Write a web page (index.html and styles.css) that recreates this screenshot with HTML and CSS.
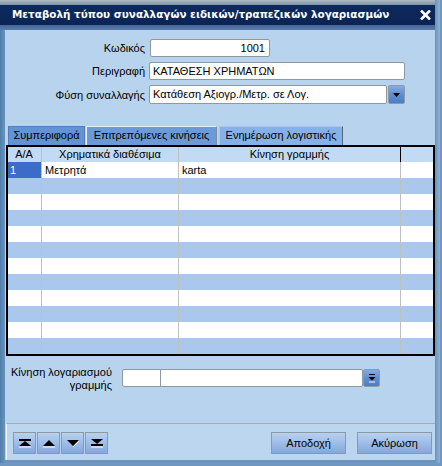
FILE: index.html
```html
<!DOCTYPE html>
<html lang="el">
<head>
<meta charset="utf-8">
<title>Μεταβολή τύπου συναλλαγών</title>
<link rel="stylesheet" href="styles.css">
</head>
<body>
<div class="window">
  <div class="titlebar">
    <span class="title">Μεταβολή τύπου συναλλαγών ειδικών/τραπεζικών λογαριασμών</span>
    <svg class="close" width="11" height="10" viewBox="0 0 11 10"><path d="M1 0.5 L10 9.5 M10 0.5 L1 9.5" stroke="#fff" stroke-width="2.6" fill="none"/></svg>
  </div>
  <div class="frame">
    <div class="form">
      <span class="lbl">Κωδικός</span>
      <div class="field code">1001</div>
      <span class="lbl">Περιγραφή</span>
      <div class="field desc">ΚΑΤΑΘΕΣΗ ΧΡΗΜΑΤΩΝ</div>
      <span class="lbl">Φύση συναλλαγής</span>
      <div class="combo">
        <div class="field combo-text">Κατάθεση Αξιογρ./Μετρ. σε Λογ.</div>
        <div class="drop"><svg width="7" height="4" viewBox="0 0 7 4"><path d="M0 0 H7 L3.5 4 Z" fill="#000"/></svg></div>
      </div>
    </div>

    <div class="tabs">
      <div class="tab t1">Συμπεριφορά</div>
      <div class="tab t2 active">Επιτρεπόμενες κινήσεις</div>
      <div class="tab t3">Ενημέρωση λογιστικής</div>
    </div>

    <div class="grid">
      <div class="row head">
        <div class="c c1">A/A</div>
        <div class="c c2">Χρηματικά διαθέσιμα</div>
        <div class="c c3">Κίνηση γραμμής</div>
        <div class="c c4"></div>
      </div>
      <div class="row"><div class="c c1 sel">1</div><div class="c c2">Μετρητά</div><div class="c c3">karta</div><div class="c c4"></div></div>
      <div class="row alt"><div class="c c1"></div><div class="c c2"></div><div class="c c3"></div><div class="c c4"></div></div>
      <div class="row"><div class="c c1"></div><div class="c c2"></div><div class="c c3"></div><div class="c c4"></div></div>
      <div class="row alt"><div class="c c1"></div><div class="c c2"></div><div class="c c3"></div><div class="c c4"></div></div>
      <div class="row"><div class="c c1"></div><div class="c c2"></div><div class="c c3"></div><div class="c c4"></div></div>
      <div class="row alt"><div class="c c1"></div><div class="c c2"></div><div class="c c3"></div><div class="c c4"></div></div>
      <div class="row"><div class="c c1"></div><div class="c c2"></div><div class="c c3"></div><div class="c c4"></div></div>
      <div class="row alt"><div class="c c1"></div><div class="c c2"></div><div class="c c3"></div><div class="c c4"></div></div>
      <div class="row"><div class="c c1"></div><div class="c c2"></div><div class="c c3"></div><div class="c c4"></div></div>
      <div class="row alt"><div class="c c1"></div><div class="c c2"></div><div class="c c3"></div><div class="c c4"></div></div>
      <div class="row"><div class="c c1"></div><div class="c c2"></div><div class="c c3"></div><div class="c c4"></div></div>
      <div class="row alt"><div class="c c1"></div><div class="c c2"></div><div class="c c3"></div><div class="c c4"></div></div>
    </div>

    <div class="movement">
      <span class="mlbl">Κίνηση λογαριασμού<br>γραμμής</span>
      <div class="mgroup">
        <div class="msmall"></div>
        <div class="mbig"></div>
      </div>
      <div class="drop mdrop"><svg width="8" height="9" viewBox="0 0 8 9"><path d="M1 0.5 H7" stroke="#000" stroke-width="1"/><path d="M0.5 3 H7.5 L4 6.5 Z" fill="#000"/><path d="M1 8 H7" stroke="#fff" stroke-width="1"/></svg></div>
    </div>

    <div class="footer">
      <div class="nav">
        <div class="btn nb"><svg width="14" height="10" viewBox="0 0 14 10"><rect x="1" y="1" width="12" height="2" fill="#000"/><path d="M7 3 L13 8 H1 Z" fill="#000"/><path d="M1 9 H13" stroke="#fff"/></svg></div>
        <div class="btn nb"><svg width="14" height="10" viewBox="0 0 14 10"><path d="M7 2 L13 8 H1 Z" fill="#000"/><path d="M1 9 H13" stroke="#fff"/></svg></div>
        <div class="btn nb"><svg width="14" height="10" viewBox="0 0 14 10"><path d="M1 2 H13 L7 8 Z" fill="#000"/><path d="M7 9 L13 3" stroke="#fff"/></svg></div>
        <div class="btn nb"><svg width="14" height="10" viewBox="0 0 14 10"><path d="M1 1 H13 L7 6 Z" fill="#000"/><rect x="1" y="6" width="12" height="2" fill="#000"/><path d="M1 9 H13" stroke="#fff"/></svg></div>
      </div>
      <div class="actions">
        <div class="btn wide">Αποδοχή</div>
        <div class="btn wide">Ακύρωση</div>
      </div>
    </div>
  </div>
</div>
</body>
</html>
```

FILE: styles.css
```css
html, body {
  margin: 0;
  padding: 0;
}
body {
  width: 442px;
  height: 466px;
  overflow: hidden;
  background: #6f97c0;
  font-family: "Liberation Sans", Arial, sans-serif;
  font-size: 11px;
  color: #000;
}
.window {
  width: 440px;
  height: 463px;
  display: flex;
  flex-direction: column;
  background: linear-gradient(90deg, #4f7eab 0, #6a94bd 5px, #6a94bd 435px, #8fb2d3 440px);
}
.titlebar {
  height: 30px;
  flex: none;
  margin-right: 5px;
  display: flex;
  align-items: flex-start;
  background: linear-gradient(180deg, #b0bbc6 0, #7c90a7 5px, #0d2a5d 5px, #0a2454 25px, #46679a 25px, #5a7ca9 30px);
}
.title {
  padding: 7px 0 0 12px;
  line-height: 14px;
  font-family: "DejaVu Sans", Verdana, sans-serif;
  font-weight: bold;
  font-size: 10.4px;
  color: #fff;
  white-space: nowrap;
}
.close {
  margin: 10px 4px 0 auto;
}
.frame {
  flex: 1;
  margin: 0 5px 3px 5px;
  background: #b8d3ee;
  display: flex;
  flex-direction: column;
}

/* top form */
.form {
  margin-top: 9px;
  display: grid;
  grid-template-columns: 140px 1fr;
  column-gap: 4px;
  row-gap: 5px;
  align-items: center;
}
.lbl {
  text-align: right;
  white-space: nowrap;
}
.field {
  box-sizing: border-box;
  height: 18px;
  line-height: 16px;
  background: #fff;
  border: 1px solid #8f979f;
  border-radius: 2px;
  padding: 0 3px;
  white-space: nowrap;
}
.code {
  margin-left: 1px;
  width: 120px;
  text-align: right;
  padding-right: 4px;
}
.desc {
  width: 256px;
}
.combo {
  display: flex;
  height: 19px;
}
.combo-text {
  width: 238px;
  height: 19px;
  line-height: 17px;
}
.drop {
  box-sizing: border-box;
  width: 17px;
  height: 19px;
  margin-left: 1px;
  border: 1px solid #8e9aa8;
  border-radius: 2px;
  background: linear-gradient(180deg, #83ade4 0, #5f8fd2 50%, #4c7cc4 100%);
  display: flex;
  align-items: center;
  justify-content: center;
}

/* tabs */
.tabs {
  margin-top: 22px;
  margin-left: 3px;
  display: flex;
  height: 19px;
}
.tab {
  box-sizing: border-box;
  height: 19px;
  line-height: 17px;
  text-align: center;
  white-space: nowrap;
  border: 1px solid #4f7fbf;
  border-bottom: none;
  background: #6493d3;
}
.t1 { width: 77px; }
.t2 { width: 131px; margin-left: 1px; }
.t3 { width: 124px; margin-left: 2px; }
.tab.active {
  border-color: #e6eef8 #7d8ea4 #7d8ea4 #e6eef8;
  background: #6c9ad8;
}
.t3 {
  background: #86b1e6;
  border-color: #a9c6ec #55657a #55657a #a9c6ec;
}

/* grid */
.grid {
  margin-left: 1px;
  border: 2px solid #000;
  display: flex;
  flex-direction: column;
}
.row {
  display: flex;
  height: 16px;
  background: #fff;
}
.row.alt {
  background: #aac8ee;
}
.row.head {
  height: 15px;
  background: #c2daf3;
}
.c {
  box-sizing: border-box;
  height: 100%;
  border-right: 1px solid #c0c0c0;
  padding: 1px 3px 0;
  line-height: 15px;
  white-space: nowrap;
  overflow: hidden;
}
.head .c {
  text-align: center;
  padding-top: 0;
  line-height: 15px;
}
.c1 { width: 34px; padding-left: 2px; }
.c2 { width: 137px; }
.c3 { width: 222px; }
.c4 { flex: 1; border-right: none; }
.head .c3 { border-right-color: #000; }
.c1.sel {
  background: #3a6cc8;
  color: #fff;
}

/* movement */
.movement {
  margin-top: 13px;
  display: flex;
  align-items: flex-start;
}
.mlbl {
  width: 107px;
  margin-top: -3px;
  text-align: right;
  line-height: 13px;
  white-space: nowrap;
}
.mgroup {
  margin-left: 10px;
  display: flex;
  box-sizing: border-box;
  height: 18px;
  border: 1px solid #8f979f;
  border-radius: 2px;
  background: #fff;
}
.msmall {
  width: 37px;
  border-right: 1px solid #8f979f;
}
.mbig {
  width: 201px;
}
.mdrop {
  margin-left: 0;
  height: 18px;
}

/* footer */
.footer {
  margin-top: auto;
  margin-left: 1px;
  height: 37px;
  box-sizing: border-box;
  border-top: 1px solid #a3a9b0;
  border-left: 1px solid #f2f7fc;
  background: #bdd6ef;
  padding: 8px 3px 0 6px;
  display: flex;
  align-items: flex-start;
  justify-content: space-between;
}
.nav {
  display: flex;
  gap: 1px;
}
.btn {
  box-sizing: border-box;
  height: 22px;
  border: 1px solid #8e98a3;
  background: linear-gradient(180deg, #b9d1f0 0, #9ebde7 50%, #86a8da 100%);
  display: flex;
  align-items: center;
  justify-content: center;
}
.nb {
  width: 23px;
}
.actions {
  display: flex;
  gap: 11px;
}
.wide {
  width: 75px;
}
```
